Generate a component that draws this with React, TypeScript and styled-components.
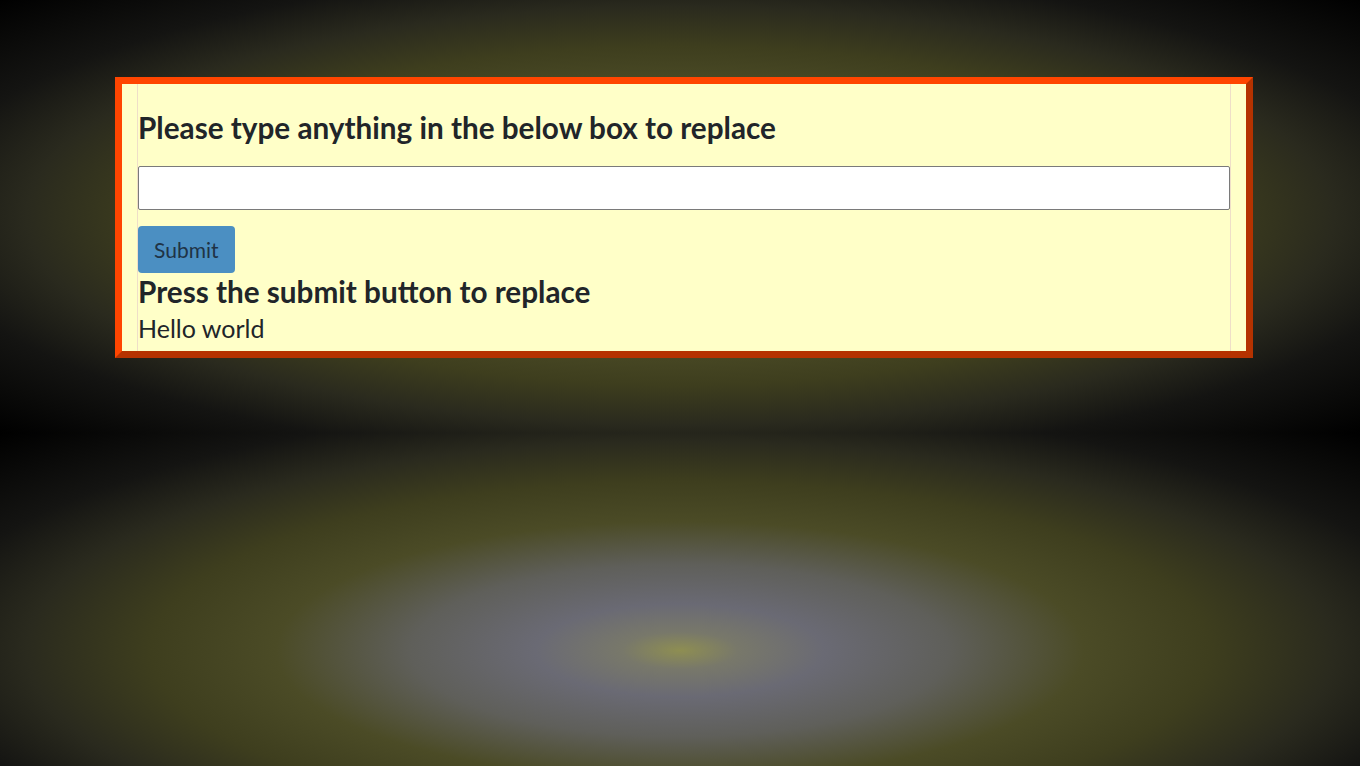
import React from 'react';
import styled, { createGlobalStyle } from 'styled-components';

const GlobalStyle = createGlobalStyle`
  html {
    background-color: #000;
    background-image: radial-gradient(
      ellipse farthest-corner at 50% 50%,
      #8e8e52 0%,
      #78786a 6%,
      #6a6a74 15%,
      #5f5f5a 28%,
      #4b4b26 42%,
      #3e3e1e 55%,
      #2a2a1e 68%,
      #141412 80%,
      #000 100%
    );
    background-size: 100% 435px;
    background-position: 0 -2px;
    background-repeat: repeat;
  }
  body {
    margin: 0;
    font-family: Lato, "Open Sans", sans-serif;
    color: #212529;
  }
`;

const Page = styled.div`
  padding: 77px 107px 0 115px;
`;

const Card = styled.div`
  border: 7px solid;
  border-color: #ff4500 #b53200 #b53200 #ff4500;
  background: #ffffc8;
  padding: 0 15px;
`;

const Container = styled.div`
  border-left: 1px solid rgba(225, 195, 200, 0.55);
  border-right: 1px solid rgba(225, 195, 200, 0.55);
  padding: 27px 0 4px;
`;

const Heading = styled.h3<{ $gap?: number }>`
  margin: ${p => p.$gap ?? 0}px 0 0;
  font-size: 29.7px;
  font-weight: 700;
  line-height: 34px;
`;

const TextBox = styled.input`
  display: block;
  box-sizing: border-box;
  width: 100%;
  height: 44px;
  margin: 21px 0 16px;
  border: 1px solid #7a7a7a;
  border-radius: 2px;
  background: #fff;
`;

const SubmitButton = styled.button`
  display: block;
  height: 47px;
  padding: 0 16px;
  border: none;
  border-radius: 4px;
  background: #4b8fc2;
  color: #1f3346;
  font-family: Lato, "Open Sans", sans-serif;
  font-size: 21px;
`;

const Result = styled.p`
  margin: 0;
  font-size: 25px;
  line-height: 38px;
`;

export default function App() {
  return (
    <>
      <GlobalStyle />
      <Page>
        <Card>
          <Container>
            <Heading>Please type anything in the below box to replace</Heading>
            <TextBox type="text" />
            <SubmitButton type="button">Submit</SubmitButton>
            <Heading $gap={2}>Press the submit button to replace</Heading>
            <Result>Hello world</Result>
          </Container>
        </Card>
      </Page>
    </>
  );
}
